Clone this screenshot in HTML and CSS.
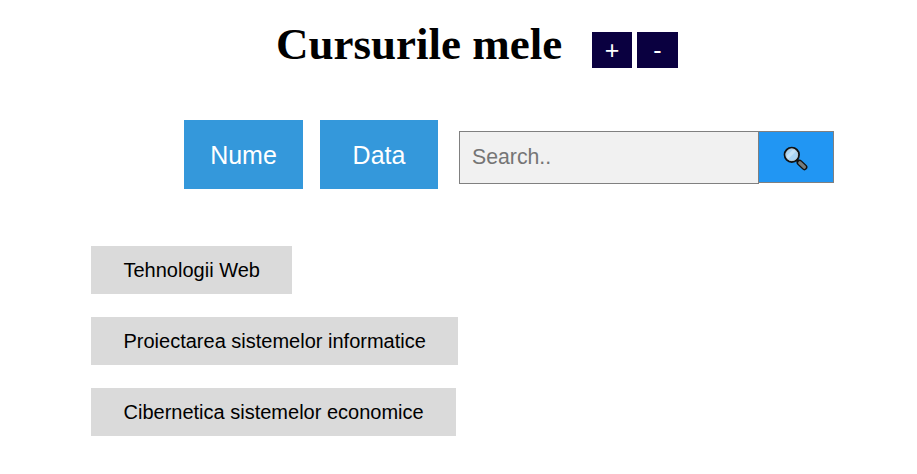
FILE: index.html
```html
<!DOCTYPE html>
<html lang="ro">
<head>
<meta charset="utf-8">
<title>Cursurile mele</title>
<link rel="stylesheet" href="styles.css">
</head>
<body>
<header class="heading">
  <h1>Cursurile mele</h1>
  <div class="actions">
    <button class="small add">+</button>
    <button class="small remove">-</button>
  </div>
</header>
<div class="toolbar">
  <button class="sort by-name">Nume</button>
  <button class="sort by-date">Data</button>
  <form class="search">
    <input type="text" placeholder="Search..">
    <button type="button" class="submit" aria-label="Search">
      <svg width="26" height="26" viewBox="0 0 26 26">
        <path d="M14 14 17 17" stroke="#111" stroke-width="3"/>
        <path d="M16.6 16.6 21.4 21.2" stroke="#111" stroke-width="6" stroke-linecap="round"/>
        <path d="M16.8 16.8 21.3 21.1" stroke="#737b7d" stroke-width="3.4" stroke-linecap="round"/>
        <circle cx="8.8" cy="8.8" r="7.2" fill="#a9d5f5" stroke="#111" stroke-width="1.9"/>
        <path d="M3.6 9.9 9.9 3.6A5.6 5.6 0 0 1 13 5.2L5.2 13A5.6 5.6 0 0 1 3.6 9.9Z" fill="#c5e3f8"/>
        <circle cx="8.8" cy="8.8" r="5.9" fill="none" stroke="#b9c5cc" stroke-width=".8"/>
      </svg>
    </button>
  </form>
</div>
<ul class="courses">
  <li class="web">Tehnologii Web</li>
  <li class="design">Proiectarea sistemelor informatice</li>
  <li class="cyber">Cibernetica sistemelor economice</li>
</ul>
</body>
</html>
```
FILE: styles.css
```css
* { box-sizing: border-box; }

body {
  margin: 0;
  background: #fff;
  font-family: "Liberation Sans", Arial, sans-serif;
}

button {
  display: flex;
  align-items: center;
  justify-content: center;
  padding: 0;
  border: 0;
  color: #fff;
  font: 25px "Liberation Sans", Arial, sans-serif;
}

.heading {
  display: flex;
  height: 120px;
  padding-left: 276px;
}

h1 {
  width: 316px;
  margin: 19px 0 0;
  font: bold 45px/50px "Liberation Serif", "Times New Roman", serif;
  white-space: nowrap;
}

.actions {
  display: flex;
  gap: 5px;
  margin-top: 32px;
}

.small {
  width: 40px;
  height: 36px;
  background: #0a0040;
}

.remove { width: 41px; }

.toolbar {
  display: flex;
  align-items: flex-start;
  padding-left: 184px;
}

.sort {
  height: 69px;
  padding-top: 1px;
  background: #3498db;
}

.by-name { width: 119px; margin-right: 17px; }
.by-date { width: 118px; margin-right: 21px; }

.search {
  display: flex;
  align-items: flex-start;
  margin-top: 11px;
}

input {
  width: 300px;
  height: 53px;
  padding: 0 12px;
  border: 1px solid #808080;
  border-radius: 0;
  background: #f1f1f1;
  font: 21.25px "Liberation Sans", Arial, sans-serif;
}

input::placeholder { color: #757575; }

.submit {
  width: 75px;
  height: 52px;
  padding-top: 4px;
  border: 1px solid #808080;
  border-left: 0;
  background: #2196f3;
}

.courses {
  display: flex;
  flex-direction: column;
  align-items: flex-start;
  gap: 23px;
  margin: 57px 0 0;
  padding: 0 0 0 91px;
  list-style: none;
}

.courses li {
  height: 48px;
  padding-left: 32.5px;
  background: #dadada;
  font-size: 20px;
  line-height: 48px;
  white-space: nowrap;
}

.web { width: 201px; }
.design { width: 367px; }
.cyber { width: 365px; }
```
